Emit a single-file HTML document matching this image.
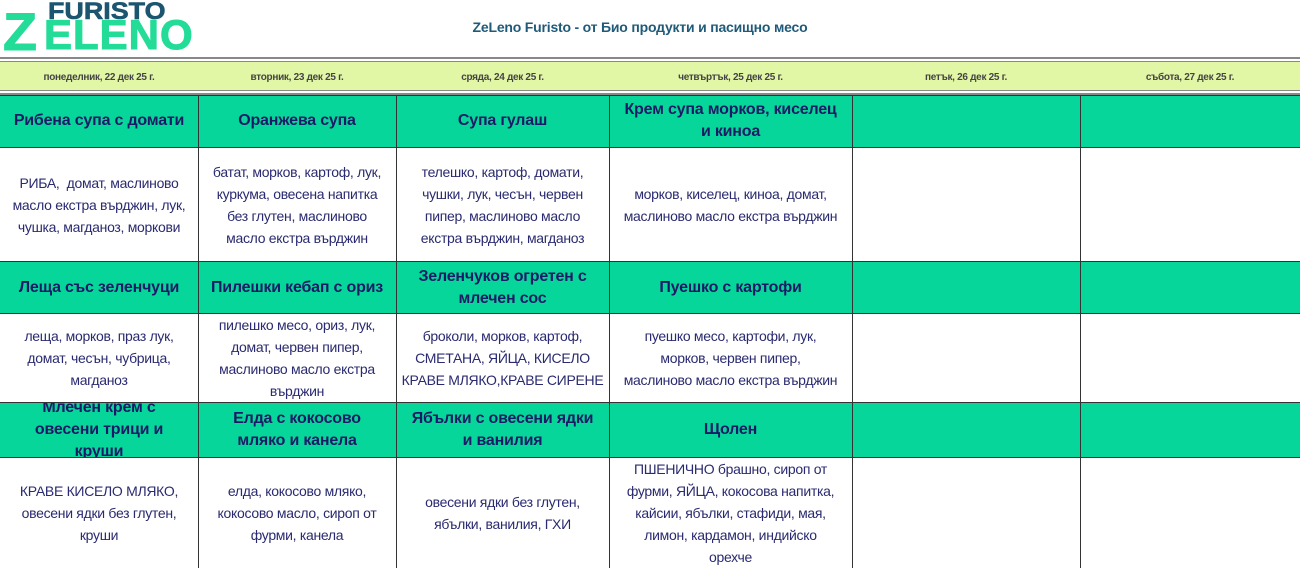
<!DOCTYPE html>
<html><head><meta charset="utf-8"><style>
*{margin:0;padding:0;box-sizing:border-box}
body{width:1300px;height:568px;overflow:hidden;background:#fff;font-family:"Liberation Sans","DejaVu Sans",sans-serif;position:relative}
.a{position:absolute}
.c{position:absolute;display:flex;align-items:center;justify-content:center;text-align:center;overflow:hidden;line-height:22px}
.g{background:#07d69b;color:#1a1a66;font-weight:bold;font-size:16px;letter-spacing:-0.2px}
.w{color:#2a2a70;font-size:14px;letter-spacing:-0.3px}
.d{color:#444;font-size:10px;font-weight:bold;letter-spacing:-0.3px}
.v{position:absolute;width:1px;background:#333}
.h{position:absolute;left:0;width:1300px;height:1px;background:#333}
</style></head><body>
<div class="a" style="left:48px;top:0px;font-size:24px;line-height:24px;font-weight:bold;color:#1b5570;transform-origin:0 0;transform:scaleX(1.12);-webkit-text-stroke:0.6px #1b5570">FURISTO</div>
<div class="a" style="left:3px;top:6px;font-size:53px;line-height:53px;font-weight:bold;color:#22dc98;transform-origin:0 0;transform:scaleX(1.05);-webkit-text-stroke:1px #22dc98">Z</div>
<div class="a" style="left:44px;top:14px;font-size:42px;line-height:42px;font-weight:bold;color:#22dc98;letter-spacing:1px;-webkit-text-stroke:1px #22dc98">ELENO</div>
<div class="a" style="left:420px;top:19px;width:440px;text-align:center;font-size:14px;font-weight:bold;color:#1f5a78;letter-spacing:-0.2px">ZeLeno Furisto - от Био продукти и пасищно месо</div>
<div class="a" style="left:0;top:57px;width:1300px;height:2px;background:#888"></div>
<div class="a" style="left:0;top:61px;width:1300px;height:30px;background:#e2f7a5;border-top:1px solid #888;border-bottom:1px solid #888"></div>
<div class="a" style="left:0;top:93px;width:1300px;height:2px;background:#888"></div>
<div class="c d" style="left:0;top:66px;width:198px;height:24px">понеделник, 22 дек 25 г.</div>
<div class="c d" style="left:198px;top:66px;width:198px;height:24px">вторник, 23 дек 25 г.</div>
<div class="c d" style="left:396px;top:66px;width:213px;height:24px">сряда, 24 дек 25 г.</div>
<div class="c d" style="left:609px;top:66px;width:243px;height:24px">четвъртък, 25 дек 25 г.</div>
<div class="c d" style="left:852px;top:66px;width:228px;height:24px">петък, 26 дек 25 г.</div>
<div class="c d" style="left:1080px;top:66px;width:220px;height:24px">събота, 27 дек 25 г.</div>

<div class="a g" style="left:0;top:95px;width:1300px;height:52px"></div>
<div class="a g" style="left:0;top:262px;width:1300px;height:51px"></div>
<div class="a g" style="left:0;top:403px;width:1300px;height:54px"></div>

<div class="c g" style="left:0;top:95px;width:198px;height:52px">Рибена супа с домати</div>
<div class="c g" style="left:198px;top:95px;width:198px;height:52px">Оранжева супа</div>
<div class="c g" style="left:396px;top:95px;width:213px;height:52px">Супа гулаш</div>
<div class="c g" style="left:609px;top:95px;width:243px;height:52px;padding:0 4px">Крем супа морков, киселец и&nbsp;киноа</div>

<div class="c w" style="left:0;top:148px;width:198px;height:113px">РИБА,&nbsp; домат, маслиново масло екстра върджин, лук, чушка, магданоз, моркови</div>
<div class="c w" style="left:198px;top:148px;width:198px;height:113px;padding:0 8px">батат, морков, картоф, лук, куркума, овесена напитка без глутен, маслиново масло екстра върджин</div>
<div class="c w" style="left:396px;top:148px;width:213px;height:113px;padding:0 10px">телешко, картоф, домати, чушки, лук, чесън, червен пипер, маслиново масло екстра върджин, магданоз</div>
<div class="c w" style="left:609px;top:148px;width:243px;height:113px">морков, киселец, киноа, домат, маслиново масло екстра върджин</div>

<div class="c g" style="left:0;top:262px;width:198px;height:51px">Леща със зеленчуци</div>
<div class="c g" style="left:198px;top:262px;width:198px;height:51px">Пилешки кебап с ориз</div>
<div class="c g" style="left:396px;top:262px;width:213px;height:51px;padding:0 8px">Зеленчуков огретен с млечен сос</div>
<div class="c g" style="left:609px;top:262px;width:243px;height:51px">Пуешко с картофи</div>

<div class="c w" style="left:0;top:314px;width:198px;height:88px;padding:0 8px">леща, морков, праз лук, домат, чесън, чубрица, магданоз</div>
<div class="c w" style="left:198px;top:314px;width:198px;height:88px;padding:0 6px">пилешко месо, ориз, лук, домат, червен пипер, маслиново масло екстра върджин</div>
<div class="c w" style="left:396px;top:314px;width:213px;height:88px;padding:0 2px">броколи, морков, картоф, СМЕТАНА, ЯЙЦА, КИСЕЛО КРАВЕ МЛЯКО,КРАВЕ СИРЕНЕ</div>
<div class="c w" style="left:609px;top:314px;width:243px;height:88px;padding:0 2px">пуешко месо, картофи, лук,<br>морков, червен пипер,<br>маслиново масло екстра върджин</div>

<div class="c g" style="left:0;top:403px;width:198px;height:54px;padding:0 20px">Млечен крем с овесени трици и круши</div>
<div class="c g" style="left:198px;top:403px;width:198px;height:54px;padding:0 20px">Елда с кокосово мляко и канела</div>
<div class="c g" style="left:396px;top:403px;width:213px;height:54px;padding:0 10px">Ябълки с овесени ядки и ванилия</div>
<div class="c g" style="left:609px;top:403px;width:243px;height:54px">Щолен</div>

<div class="c w" style="left:0;top:458px;width:198px;height:110px;padding:0 8px">КРАВЕ КИСЕЛО МЛЯКО, овесени ядки без глутен, круши</div>
<div class="c w" style="left:198px;top:458px;width:198px;height:110px;padding:0 4px">елда, кокосово мляко, кокосово масло, сироп от фурми, канела</div>
<div class="c w" style="left:396px;top:458px;width:213px;height:110px;padding:0 16px">овесени ядки без глутен, ябълки, ванилия, ГХИ</div>
<div class="c w" style="left:609px;top:458px;width:243px;height:110px;padding:0 14px;align-items:flex-start;padding-top:0">ПШЕНИЧНО брашно, сироп от фурми, ЯЙЦА, кокосова напитка, кайсии, ябълки, стафиди, мая, лимон, кардамон, индийско орехче</div>

<div class="h" style="top:95px"></div>
<div class="h" style="top:147px"></div>
<div class="h" style="top:261px"></div>
<div class="h" style="top:313px"></div>
<div class="h" style="top:402px"></div>
<div class="h" style="top:457px"></div>
<div class="v" style="left:198px;top:95px;height:473px"></div>
<div class="v" style="left:396px;top:95px;height:473px"></div>
<div class="v" style="left:609px;top:95px;height:473px"></div>
<div class="v" style="left:852px;top:95px;height:473px"></div>
<div class="v" style="left:1080px;top:95px;height:473px"></div>
</body></html>
